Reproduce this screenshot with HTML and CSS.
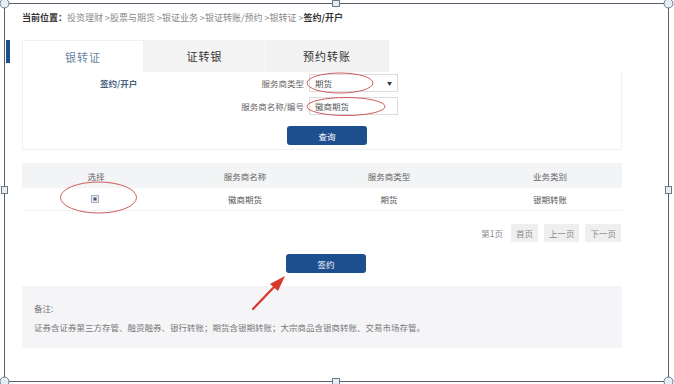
FILE: index.html
```html
<!DOCTYPE html>
<html lang="zh-CN">
<head>
    <meta charset="UTF-8">
    <title>签约/开户</title>
    <link rel="stylesheet" href="styles.css">
</head>
<body>
    <div class="frame">
        <div class="side-mark"></div>

        <div class="breadcrumb">
            <b>当前位置：</b>投资理财 &gt;股票与期货 &gt;银证业务 &gt;银证转账/预约 &gt;银转证 &gt;<b>签约/开户</b>
        </div>

        <div class="tabs">
            <div class="tab active">银转证</div>
            <div class="tab">证转银</div>
            <div class="tab last">预约转账</div>
        </div>

        <div class="panel">
            <div class="form-grid">
                <div class="panel-title">签约/开户</div>
                <label class="field-label">服务商类型</label>
                <div class="select">期货<span class="caret">▼</span></div>

                <div></div>
                <label class="field-label">服务商名称/编号</label>
                <div class="input">徽商期货</div>
            </div>
            <div class="btn-row">
                <button class="btn">查询</button>
            </div>
        </div>

        <div class="table">
            <div class="tr head">
                <div class="td c1">选择</div>
                <div class="td c2">服务商名称</div>
                <div class="td c3">服务商类型</div>
                <div class="td c4">业务类别</div>
            </div>
            <div class="tr">
                <div class="td c1"><span class="checkbox"></span></div>
                <div class="td c2">徽商期货</div>
                <div class="td c3">期货</div>
                <div class="td c4">银期转账</div>
            </div>
        </div>

        <div class="pager">
            <span class="page-info">第1页</span>
            <span class="page-btn">首页</span>
            <span class="page-btn">上一页</span>
            <span class="page-btn">下一页</span>
        </div>

        <div class="btn-row submit-row">
            <button class="btn">签约</button>
        </div>

        <div class="note">
            <div class="note-title">备注:</div>
            <div class="note-text">证券含证券第三方存管、融资融券、银行转账；期货含银期转账；大宗商品含银商转账、交易市场存管。</div>
        </div>
    </div>

    <!-- annotations and selection handles drawn over the screenshot -->
    <svg class="overlay" width="674" height="384" viewBox="0 0 674 384">
        <g fill="none" stroke="#cf5a5a" stroke-width="1">
            <ellipse cx="340" cy="83" rx="33" ry="10" />
            <ellipse cx="346" cy="106.5" rx="39" ry="9" />
            <ellipse cx="98.5" cy="197.5" rx="38" ry="15.5" />
        </g>
        <line x1="253" y1="309" x2="276" y2="285" stroke="#d9382c" stroke-width="2.2" stroke-linecap="round" />
        <polygon points="285,276 270,284 278,291" fill="#d9382c" />

        <g fill="#e4eef6" stroke="#6c7a86" stroke-width="1">
            <circle cx="4.5" cy="3.5" r="4.5" />
            <circle cx="668.5" cy="3.5" r="4.5" />
            <circle cx="4.5" cy="381.5" r="4.5" />
            <circle cx="668.5" cy="381.5" r="4.5" />
            <rect x="332.5" y="0.5" width="7" height="6" />
            <rect x="332.5" y="378.5" width="7" height="6" />
            <rect x="1.5" y="186.5" width="6" height="7" />
            <rect x="665.5" y="186.5" width="6" height="7" />
        </g>
    </svg>
</body>
</html>
```

FILE: styles.css
```css
body {
    margin: 0;
    background: #ffffff;
    font-family: "Noto Sans CJK SC", "Noto Sans", sans-serif;
    color: #555;
}

.frame {
    position: relative;
    box-sizing: border-box;
    margin: 3px 0 0 4px;
    width: 665px;
    height: 379px;
    border: 1px solid #56606a;
    padding: 8px 0 0 17px;
}

.side-mark {
    position: absolute;
    left: 1px;
    top: 36px;
    width: 4px;
    height: 23px;
    background: #1d4f8e;
}

.breadcrumb {
    font-size: 9px;
    line-height: 12px;
    color: #8a8a8a;
    height: 12px;
}

.breadcrumb b {
    color: #333;
}

.tabs {
    display: flex;
    margin-top: 16px;
    width: 367px;
    height: 32px;
}

.tab {
    width: 122px;
    height: 32px;
    line-height: 32px;
    text-align: center;
    font-size: 11px;
    letter-spacing: 1px;
    color: #333;
    background: #f4f4f4;
    border-right: 1px solid #fafafa;
    box-sizing: border-box;
}

.tab.active {
    background: #fff;
    color: #6a86a2;
    border: 1px solid #f0f0f0;
    border-bottom: none;
}

.tab.last {
    width: 123px;
    background: #f2f2f2;
    border-right: 1px solid #ececec;
}

.panel {
    width: 600px;
    height: 78px;
    box-sizing: border-box;
    border: 1px solid #f0f0f0;
    border-top: none;
    padding-top: 2px;
}

.form-grid {
    display: grid;
    grid-template-columns: 160px 126px 90px;
    grid-auto-rows: 18px;
    row-gap: 5px;
    align-items: center;
}

.panel-title {
    padding-left: 77px;
    font-size: 8.5px;
    font-weight: bold;
    color: #44617f;
}

.field-label {
    text-align: right;
    padding-right: 5px;
    font-size: 8.5px;
    color: #666;
}

.select,
.input {
    position: relative;
    box-sizing: border-box;
    width: 89px;
    height: 18px;
    line-height: 16px;
    border: 1px solid #dcdcdc;
    padding-left: 5px;
    font-size: 8.5px;
    color: #555;
}

.caret {
    position: absolute;
    right: 5px;
    top: 0;
    font-size: 5px;
    color: #333;
}

.btn-row {
    display: flex;
    justify-content: center;
    width: 592px;
    padding-left: 8px;
    margin-top: 11px;
}

.btn {
    width: 80px;
    height: 19px;
    border: none;
    border-radius: 3px;
    background: #1d4f8e;
    color: #fff;
    font-family: inherit;
    font-size: 8.5px;
    padding: 0;
}

.table {
    width: 600px;
    margin-top: 13px;
}

.tr {
    display: flex;
    height: 22px;
    border-bottom: 1px solid #f3f3f3;
    font-size: 8.5px;
    color: #555;
}

.tr.head {
    height: 25px;
    background: #f3f4f6;
    border-bottom: none;
    color: #666;
}

.td {
    display: flex;
    align-items: center;
    justify-content: center;
}

.c1 { width: 148px; }
.c2 { width: 150px; }
.c3 { width: 138px; }
.c4 { width: 144px; padding-left: 20px; }

.checkbox {
    display: inline-block;
    box-sizing: border-box;
    width: 8px;
    height: 8px;
    border: 1px solid #a8b4c2;
    background: #4a5a6c;
    box-shadow: inset 0 0 0 1.5px #e2e8ef;
    margin-right: 2px;
}

.pager {
    display: flex;
    justify-content: flex-end;
    align-items: center;
    gap: 4px;
    width: 599px;
    margin-top: 13px;
    height: 18px;
    font-size: 8.5px;
    color: #8a8a8a;
}

.page-info {
    margin-right: 4px;
}

.page-btn {
    height: 18px;
    line-height: 18px;
    padding: 0 5px;
    background: #efefef;
}

.page-btn + .page-btn {
    margin-left: 2px;
}

.submit-row {
    margin-top: 12px;
}

.note {
    width: 600px;
    height: 62px;
    box-sizing: border-box;
    margin-top: 13px;
    background: #f5f5f7;
    padding: 16px 0 0 12px;
    font-size: 8.5px;
    color: #777;
}

.note-title {
    line-height: 12px;
}

.note-text {
    margin-top: 7px;
    line-height: 12px;
}

.overlay {
    position: absolute;
    left: 0;
    top: 0;
    pointer-events: none;
}
```
